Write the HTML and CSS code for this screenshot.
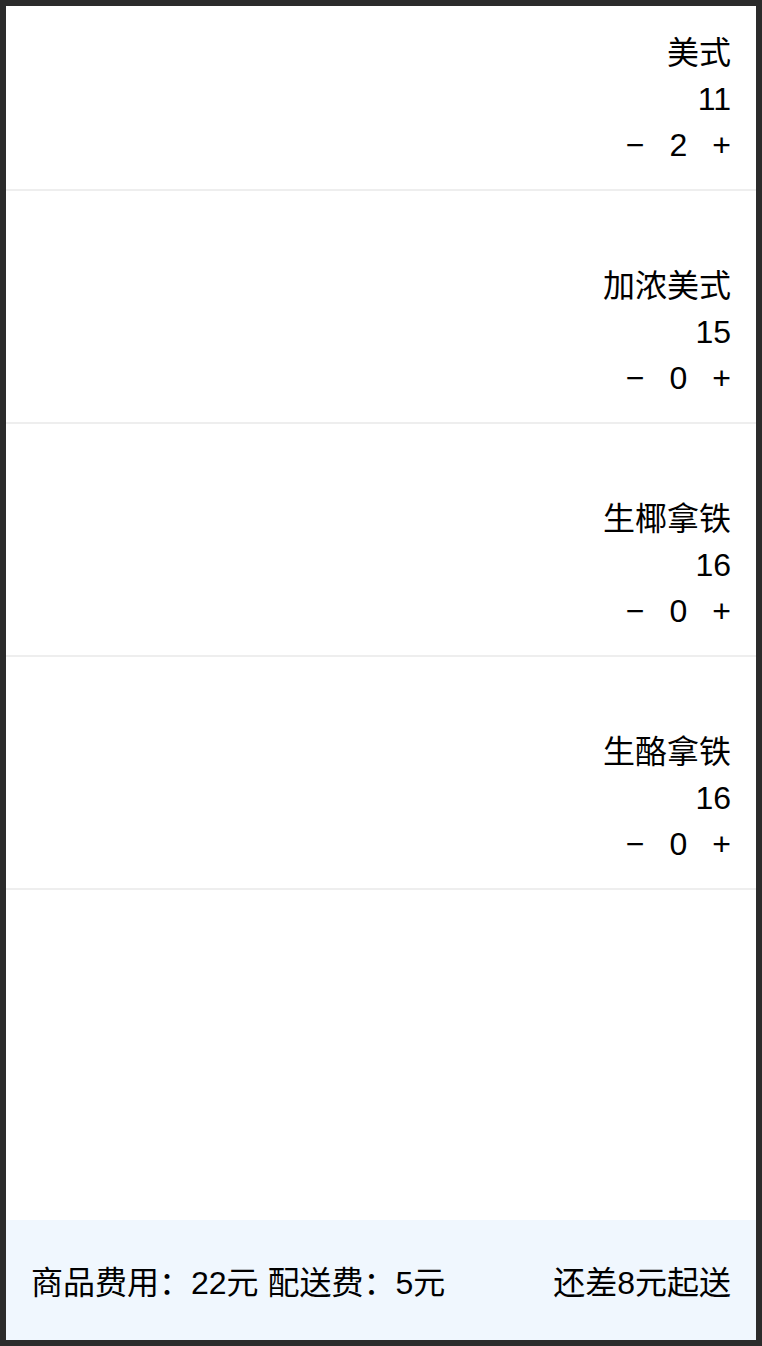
FILE: index.html
```html
<!DOCTYPE html>
<html lang="zh-CN">
<head>
<meta charset="utf-8">
<title>点单</title>
<link rel="stylesheet" href="styles.css">
</head>
<body>
<div class="screen">
  <div class="list">
    <div class="item item--first">
      <div class="name">美式</div>
      <div class="price">11</div>
      <div class="counter"><span class="btn">−</span><span class="qty">2</span><span class="btn">+</span></div>
    </div>
    <div class="item">
      <div class="name">加浓美式</div>
      <div class="price">15</div>
      <div class="counter"><span class="btn">−</span><span class="qty">0</span><span class="btn">+</span></div>
    </div>
    <div class="item">
      <div class="name">生椰拿铁</div>
      <div class="price">16</div>
      <div class="counter"><span class="btn">−</span><span class="qty">0</span><span class="btn">+</span></div>
    </div>
    <div class="item">
      <div class="name">生酪拿铁</div>
      <div class="price">16</div>
      <div class="counter"><span class="btn">−</span><span class="qty">0</span><span class="btn">+</span></div>
    </div>
  </div>
  <div class="footer">
    <div class="fees">商品费用：22元 配送费：5元</div>
    <div class="remain">还差8元起送</div>
  </div>
</div>
</body>
</html>
```
FILE: styles.css
```css
html, body {
  margin: 0;
  padding: 0;
}
body {
  background: #2b2b2b;
  padding: 6px;
  font-family: "Liberation Sans", "Noto Sans CJK SC", sans-serif;
  color: #000;
}
.screen {
  width: 750px;
  height: 1334px;
  background: #fff;
  display: flex;
  flex-direction: column;
}
.list {
  flex: 1;
}
.item {
  display: flex;
  flex-direction: column;
  align-items: flex-end;
  padding: 72px 25px 21px;
  border-bottom: 2px solid #eeeeee;
  font-size: 32px;
  line-height: 46px;
}
.item--first {
  padding-top: 24px;
}
.counter {
  display: flex;
  gap: 25px;
}
.footer {
  height: 120px;
  background: #f0f7fe;
  display: flex;
  align-items: center;
  justify-content: space-between;
  padding: 0 25px;
  font-size: 32px;
}
```
